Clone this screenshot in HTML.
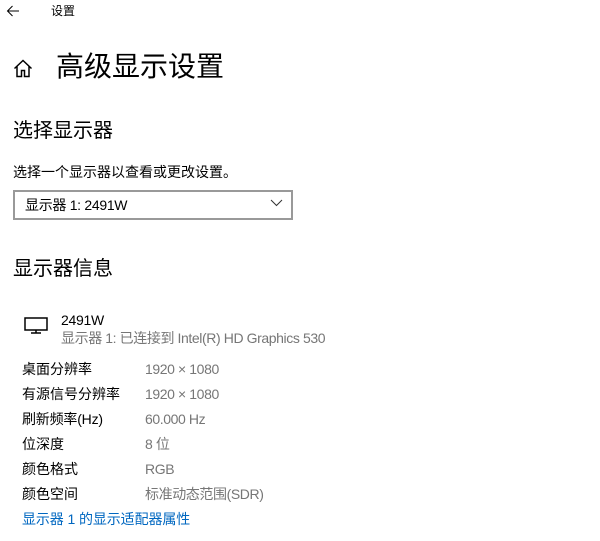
<!DOCTYPE html>
<html><head><meta charset="utf-8"><style>
body{margin:0;width:600px;height:541px;background:#fff;font-family:"Liberation Sans","Noto Sans CJK SC",sans-serif;color:#000;position:relative;overflow:hidden}
.a{position:absolute;white-space:nowrap;line-height:1}
.g{color:#767676;letter-spacing:-0.4px}
</style></head><body>
<svg class="a" style="left:6px;top:5px" width="14" height="12" viewBox="0 0 14 12"><path d="M13 6H1.5M6.5 1L1.5 6l5 5" fill="none" stroke="#000" stroke-width="1"/></svg>
<div class="a" style="left:51px;top:5px;font-size:12px">设置</div>
<svg class="a" style="left:13px;top:59px" width="20" height="19" viewBox="0 0 20 19"><path d="M1.5 9.5L10 1.5l8.5 8M4 7.5V17.5h4.5v-6h3v6H16V7.5" fill="none" stroke="#000" stroke-width="1.5"/></svg>
<div class="a" style="left:56px;top:53px;font-size:28px">高级显示设置</div>
<div class="a" style="left:13px;top:121px;font-size:20px">选择显示器</div>
<div class="a" style="left:13px;top:165px;font-size:14px">选择一个显示器以查看或更改设置。</div>
<div class="a" style="left:13px;top:190px;width:276px;height:26px;border:2px solid #999"></div>
<div class="a" style="left:25px;top:198px;font-size:14px;letter-spacing:-0.3px">显示器 1: 2491W</div>
<svg class="a" style="left:270px;top:199px" width="13" height="8" viewBox="0 0 13 8"><path d="M1 1l5.5 5.5L12 1" fill="none" stroke="#333" stroke-width="1"/></svg>
<div class="a" style="left:13px;top:259px;font-size:20px">显示器信息</div>
<svg class="a" style="left:24px;top:317px" width="24" height="17" viewBox="0 0 24 17"><rect x="1" y="1" width="22" height="12" fill="none" stroke="#000" stroke-width="1.5"/><path d="M12 13v3M7 16h10" stroke="#000" stroke-width="1.5"/></svg>
<div class="a" style="left:61px;top:313px;font-size:14px;letter-spacing:-0.3px">2491W</div>
<div class="a g" style="left:61px;top:331px;font-size:14px">显示器 1: 已连接到 Intel(R) HD Graphics 530</div>
<div class="a" style="left:22px;top:362px;font-size:14px">桌面分辨率</div><div class="a g" style="left:145px;top:362px;font-size:14px">1920 × 1080</div>
<div class="a" style="left:22px;top:387px;font-size:14px">有源信号分辨率</div><div class="a g" style="left:145px;top:387px;font-size:14px">1920 × 1080</div>
<div class="a" style="left:22px;top:412px;font-size:14px;letter-spacing:-0.2px">刷新频率(Hz)</div><div class="a g" style="left:145px;top:412px;font-size:14px">60.000 Hz</div>
<div class="a" style="left:22px;top:437px;font-size:14px">位深度</div><div class="a g" style="left:145px;top:437px;font-size:14px">8 位</div>
<div class="a" style="left:22px;top:462px;font-size:14px">颜色格式</div><div class="a g" style="left:145px;top:462px;font-size:14px">RGB</div>
<div class="a" style="left:22px;top:487px;font-size:14px">颜色空间</div><div class="a g" style="left:145px;top:487px;font-size:14px">标准动态范围(SDR)</div>
<div class="a" style="left:22px;top:512px;font-size:14px;color:#0067c0;letter-spacing:-0.1px">显示器 1 的显示适配器属性</div>
</body></html>
